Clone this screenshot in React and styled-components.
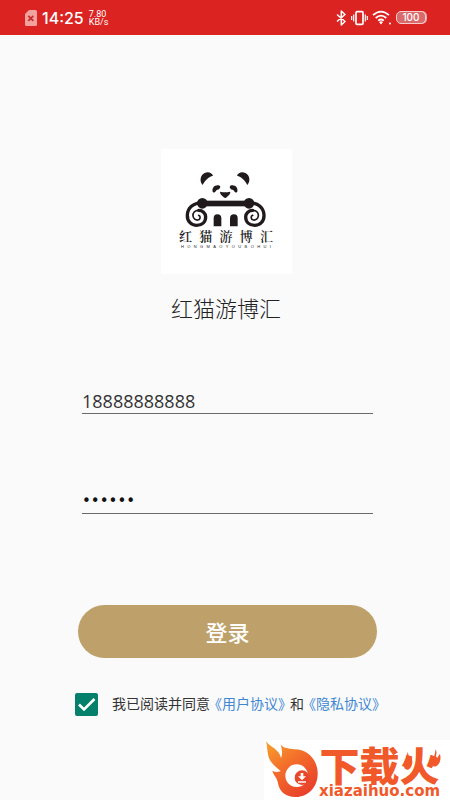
import React, { useState } from "react";
import styled, { createGlobalStyle } from "styled-components";

const GlobalStyle = createGlobalStyle`
  * {
    box-sizing: border-box;
  }
  body {
    margin: 0;
    background: #fafafb;
    color: #222;
    font-family: "Noto Sans CJK SC", sans-serif;
  }
`;

const Screen = styled.div`
  position: relative;
  min-height: 100vh;
  display: flex;
  flex-direction: column;
`;

const StatusBar = styled.header`
  display: flex;
  align-items: center;
  justify-content: space-between;
  height: 35px;
  padding: 0 24px 0 25px;
  background: #db2321;
  color: #fff;
  font-family: Roboto, sans-serif;
`;

const StatusGroup = styled.div`
  display: flex;
  align-items: center;
  gap: ${props => props.gap}px;
`;

const Clock = styled.span`
  font-family: Inter, sans-serif;
  font-size: 16px;
  font-weight: 500;
  line-height: 20px;
`;

const Speed = styled.span`
  display: flex;
  flex-direction: column;
  font-size: 9px;
  font-weight: 400;
  line-height: 8px;
`;

const Battery = styled.span`
  width: 30px;
  height: 13px;
  border: 1px solid #f8cccc;
  border-radius: 5px;
  background: #d9696b;
  box-shadow: 1px 0 0 #f0a9a9;
  font-family: Inter, sans-serif;
  font-size: 10px;
  font-weight: 500;
  line-height: 11px;
  text-align: center;
`;

const Main = styled.main`
  display: flex;
  flex-direction: column;
  align-items: center;
  padding: 114px 73px 0 75px;
`;

const LogoCard = styled.div`
  display: flex;
  flex-direction: column;
  align-items: center;
  width: 131px;
  height: 125px;
  padding-top: 22px;
  background: #fff;
`;

const LogoName = styled.div`
  display: flex;
  justify-content: space-between;
  width: 94px;
  margin-top: 2px;
  font-family: "Noto Serif CJK SC", "Noto Sans CJK SC", serif;
  font-size: 13px;
  font-weight: 600;
  line-height: 14px;
`;

const LogoLatin = styled.div`
  display: flex;
  justify-content: space-between;
  width: 90px;
  margin-top: 1px;
  font-family: "Liberation Sans", sans-serif;
  font-size: 4px;
  line-height: 6px;
`;

const Title = styled.h1`
  margin: 17px 0 0;
  font-size: 22px;
  font-weight: 300;
  line-height: 32px;
`;

const Form = styled.form`
  width: 100%;
  display: flex;
  flex-direction: column;
  margin-top: 65px;
`;

const Field = styled.input`
  height: 26px;
  margin: 0 4px ${props => props.gap}px 7px;
  padding: 0;
  border: 0;
  border-bottom: 1px solid #6b6b6b;
  outline: 0;
  background: transparent;
  color: #333;
  font-family: "Open Sans", sans-serif;
  font-size: 18px;
  font-weight: 400;
`;

const PasswordField = styled(Field)`
  color: #111;
  font-family: "DejaVu Sans", sans-serif;
  font-size: 15px;
`;

const LoginButton = styled.button`
  height: 53px;
  margin-left: 3px;
  padding: 0 0 2px;
  border: 0;
  border-radius: 27px;
  background: #bea16a;
  color: #fff;
  font-family: inherit;
  font-size: 22px;
  font-weight: 500;
  cursor: pointer;
`;

const Agreement = styled.div`
  display: flex;
  align-items: center;
  gap: 14px;
  margin-top: 35px;
  font-size: 14px;
  line-height: 20px;
  white-space: nowrap;
`;

const Check = styled.span`
  display: grid;
  flex: none;
  width: 23px;
  height: 23px;
  > * {
    grid-area: 1 / 1;
  }
  svg {
    pointer-events: none;
  }
`;

const CheckInput = styled.input`
  appearance: none;
  width: 23px;
  height: 23px;
  margin: 0;
  border: 2px solid #04806b;
  border-radius: 2px;
  &:checked {
    background: #04806b;
  }
`;

const AgreementText = styled.span`
  padding-bottom: 3px;
  color: #333;
`;

const DocLink = styled.a`
  margin: 0 -2px;
  color: #3f87d2;
  text-decoration: none;
`;

const Watermark = styled.div`
  position: absolute;
  right: 0;
  bottom: 0;
  display: flex;
  width: 186px;
  height: 60px;
  background: #fff;
  color: #f1592a;
`;

const WatermarkText = styled.div`
  display: flex;
  flex-direction: column;
  align-items: center;
  padding: 5px 0 0 1px;
`;

const WatermarkName = styled.strong`
  font-size: 40px;
  font-weight: 900;
  line-height: 38px;
`;

const FireChar = styled.span`
  position: relative;
  svg {
    position: absolute;
    left: 0;
    bottom: 21px;
  }
`;

const WatermarkUrl = styled.span`
  font-family: "DejaVu Sans", sans-serif;
  font-size: 15px;
  font-weight: 700;
  line-height: 17px;
`;

const SimIcon = () => (
  <svg width="12" height="16" viewBox="0 0 12 16">
    <path d="M4 0h6.500q1.500 0 1.500 1.500v13q0 1.500-1.500 1.500h-9Q0 16 0 14.500V4z" fill="#f2a3a0" />
    <path d="M3.300 5.800l5 5M8.300 5.800l-5 5" stroke="#c92c2b" strokeWidth="1.800" />
  </svg>
);

const BluetoothIcon = () => (
  <svg width="11" height="16" viewBox="0 0 11 16" fill="none" stroke="#fff" strokeWidth="1.500">
    <path d="M1 4.500l8 7L5.300 15V1L9 4.500l-8 7" strokeLinejoin="round" />
  </svg>
);

const VibrateIcon = () => (
  <svg width="17" height="16" viewBox="0 0 17 16" fill="none" stroke="#fff">
    <rect x="5" y="1.700" width="7" height="12.600" rx="1" strokeWidth="1.700" />
    <path d="M2.700 4.500v7M14.300 4.500v7M.7 6v4M16.300 6v4" strokeWidth="1.200" />
  </svg>
);

const WifiIcon = () => (
  <svg width="20" height="15" viewBox="0 0 20 15" fill="none" stroke="#fff" strokeWidth="1.800">
    <path d="M1 5.200q8-7.200 16 0M3.700 8q5.300-4.700 10.600 0M6.200 10.600q2.800-2.300 5.600 0" />
    <path d="M7 12q2-1.500 4 0l-2 2.500z" fill="#fff" stroke="none" />
    <circle cx="18" cy="13.500" r="1" fill="#fff" stroke="none" />
  </svg>
);

const Scroll = () => (
  <g fill="none" stroke="#211a1d" strokeLinecap="round">
    <path d="M146 171C119 172 103 187 102 208C101 228 115 239 130 239C146 239 157 229 157 214C157 202 147 194 136 194" strokeWidth="10" />
    <path d="M136 194C124 194 118 202 119 211C120 219 127 224 134 223C141 222 143 212 136 209" strokeWidth="5" />
  </g>
);

const PandaLogo = () => (
  <svg width="82" height="56" viewBox="95 76 246 168" fill="#211a1d">
    <path d="M148 118C138 108 140 88 154 82C165 77 176 82 179 90C166 93 154 105 148 118Z" />
    <path d="M282 118C292 108 290 88 276 82C265 77 254 82 251 90C264 93 276 105 282 118Z" />
    <path d="M178 138C175 126 185 116 199 120C204 124 198 132 190 133C186 140 182 143 178 138Z" />
    <path d="M252 138C255 126 245 116 231 120C226 124 232 132 240 133C244 140 248 143 252 138Z" />
    <path d="M201 138Q215 142 230 138Q233 140 228 147L220 155Q216 159 211 155L203 147Q198 140 201 138Z" />
    <rect x="143" y="165" width="147" height="17" />
    <circle cx="147" cy="173" r="16" />
    <circle cx="287" cy="173" r="16" />
    <Scroll />
    <g transform="translate(434 0) scale(-1 1)">
      <Scroll />
    </g>
    <path d="M181 242V218Q181 206 192 206Q204 206 204 218V242Z" />
    <path d="M230 242V218Q230 206 242 206Q253 206 253 218V242Z" />
  </svg>
);

const FlameLogo = () => (
  <svg width="54" height="58" viewBox="27 30 162 174">
    <defs>
      <linearGradient id="flame" x1="0" y1="0" x2="0.700" y2="1">
        <stop offset="0" stopColor="#f8a22d" />
        <stop offset="0.500" stopColor="#f36b2a" />
        <stop offset="1" stopColor="#e9402b" />
      </linearGradient>
    </defs>
    <path
      d="M33 33C45 52 72 56 78 84C84 72 80 56 77 43C86 56 98 55 118 58C160 58 190 92 188 135C186 175 155 202 122 201C88 200 72 182 68 155C65 141 55 136 52 122C60 127 69 127 77 123C60 108 46 100 40 78C36 62 37 48 33 33Z"
      fill="url(#flame)"
    />
    <circle cx="125" cy="137" r="34" fill="#fff" />
    <circle cx="141" cy="143" r="22" fill="#e9472b" />
    <path d="M137 129h8v10h8l-12 12-12-12h8zM129 154h24v4h-24z" fill="#fff" />
  </svg>
);

const FireTips = () => (
  <svg width="42" height="24" viewBox="0 0 126 72" fill="#f1592a">
    <path d="M22 12C30 22 20 31 26 39C30 35 29 29 33 25C39 37 39 54 28 63C15 72 7 55 14 38C15 43 17 44 19 45C15 33 23 24 22 12Z" />
    <path d="M106 4C114 15 105 23 110 31C115 28 115 22 120 18C124 33 120 49 108 55C96 59 90 43 96 30C98 34 101 36 103 37C99 26 107 17 106 4Z" />
  </svg>
);

const App = () => {
  const [phone, setPhone] = useState("18888888888");
  const [password, setPassword] = useState("888888");
  const [agreed, setAgreed] = useState(true);

  return (
    <>
      <GlobalStyle />
      <Screen>
        <StatusBar>
          <StatusGroup gap={5}>
            <SimIcon />
            <Clock>14:25</Clock>
            <Speed>
              <span>7.80</span>
              <span>KB/s</span>
            </Speed>
          </StatusGroup>
          <StatusGroup gap={4}>
            <BluetoothIcon />
            <VibrateIcon />
            <WifiIcon />
            <Battery>100</Battery>
          </StatusGroup>
        </StatusBar>
        <Main>
          <LogoCard>
            <PandaLogo />
            <LogoName>
              {[..."红猫游博汇"].map(char => (
                <span key={char}>{char}</span>
              ))}
            </LogoName>
            <LogoLatin>
              {[..."HONGMAOYOUBOHUI"].map((char, i) => (
                <span key={i}>{char}</span>
              ))}
            </LogoLatin>
          </LogoCard>
          <Title>红猫游博汇</Title>
          <Form onSubmit={e => e.preventDefault()}>
            <Field
              type="tel"
              aria-label="手机号"
              gap={74}
              value={phone}
              onChange={e => setPhone(e.target.value)}
            />
            <PasswordField
              type="password"
              aria-label="密码"
              gap={91}
              value={password}
              onChange={e => setPassword(e.target.value)}
            />
            <LoginButton type="submit">登录</LoginButton>
            <Agreement>
              <Check>
                <CheckInput
                  id="agree"
                  type="checkbox"
                  checked={agreed}
                  onChange={e => setAgreed(e.target.checked)}
                />
                {agreed && (
                  <svg width="23" height="23" viewBox="0 0 23 23">
                    <path d="M4 11.500l5 5L19.500 6" fill="none" stroke="#fff" strokeWidth="2.600" />
                  </svg>
                )}
              </Check>
              <AgreementText>
                <label htmlFor="agree">我已阅读并同意</label>
                <DocLink href="#terms">《用户协议》</DocLink>和
                <DocLink href="#privacy">《隐私协议》</DocLink>
              </AgreementText>
            </Agreement>
          </Form>
        </Main>
        <Watermark>
          <FlameLogo />
          <WatermarkText>
            <WatermarkName>
              下载
              <FireChar>
                火
                <FireTips />
              </FireChar>
            </WatermarkName>
            <WatermarkUrl>xiazaihuo.com</WatermarkUrl>
          </WatermarkText>
        </Watermark>
      </Screen>
    </>
  );
};

export default App;
